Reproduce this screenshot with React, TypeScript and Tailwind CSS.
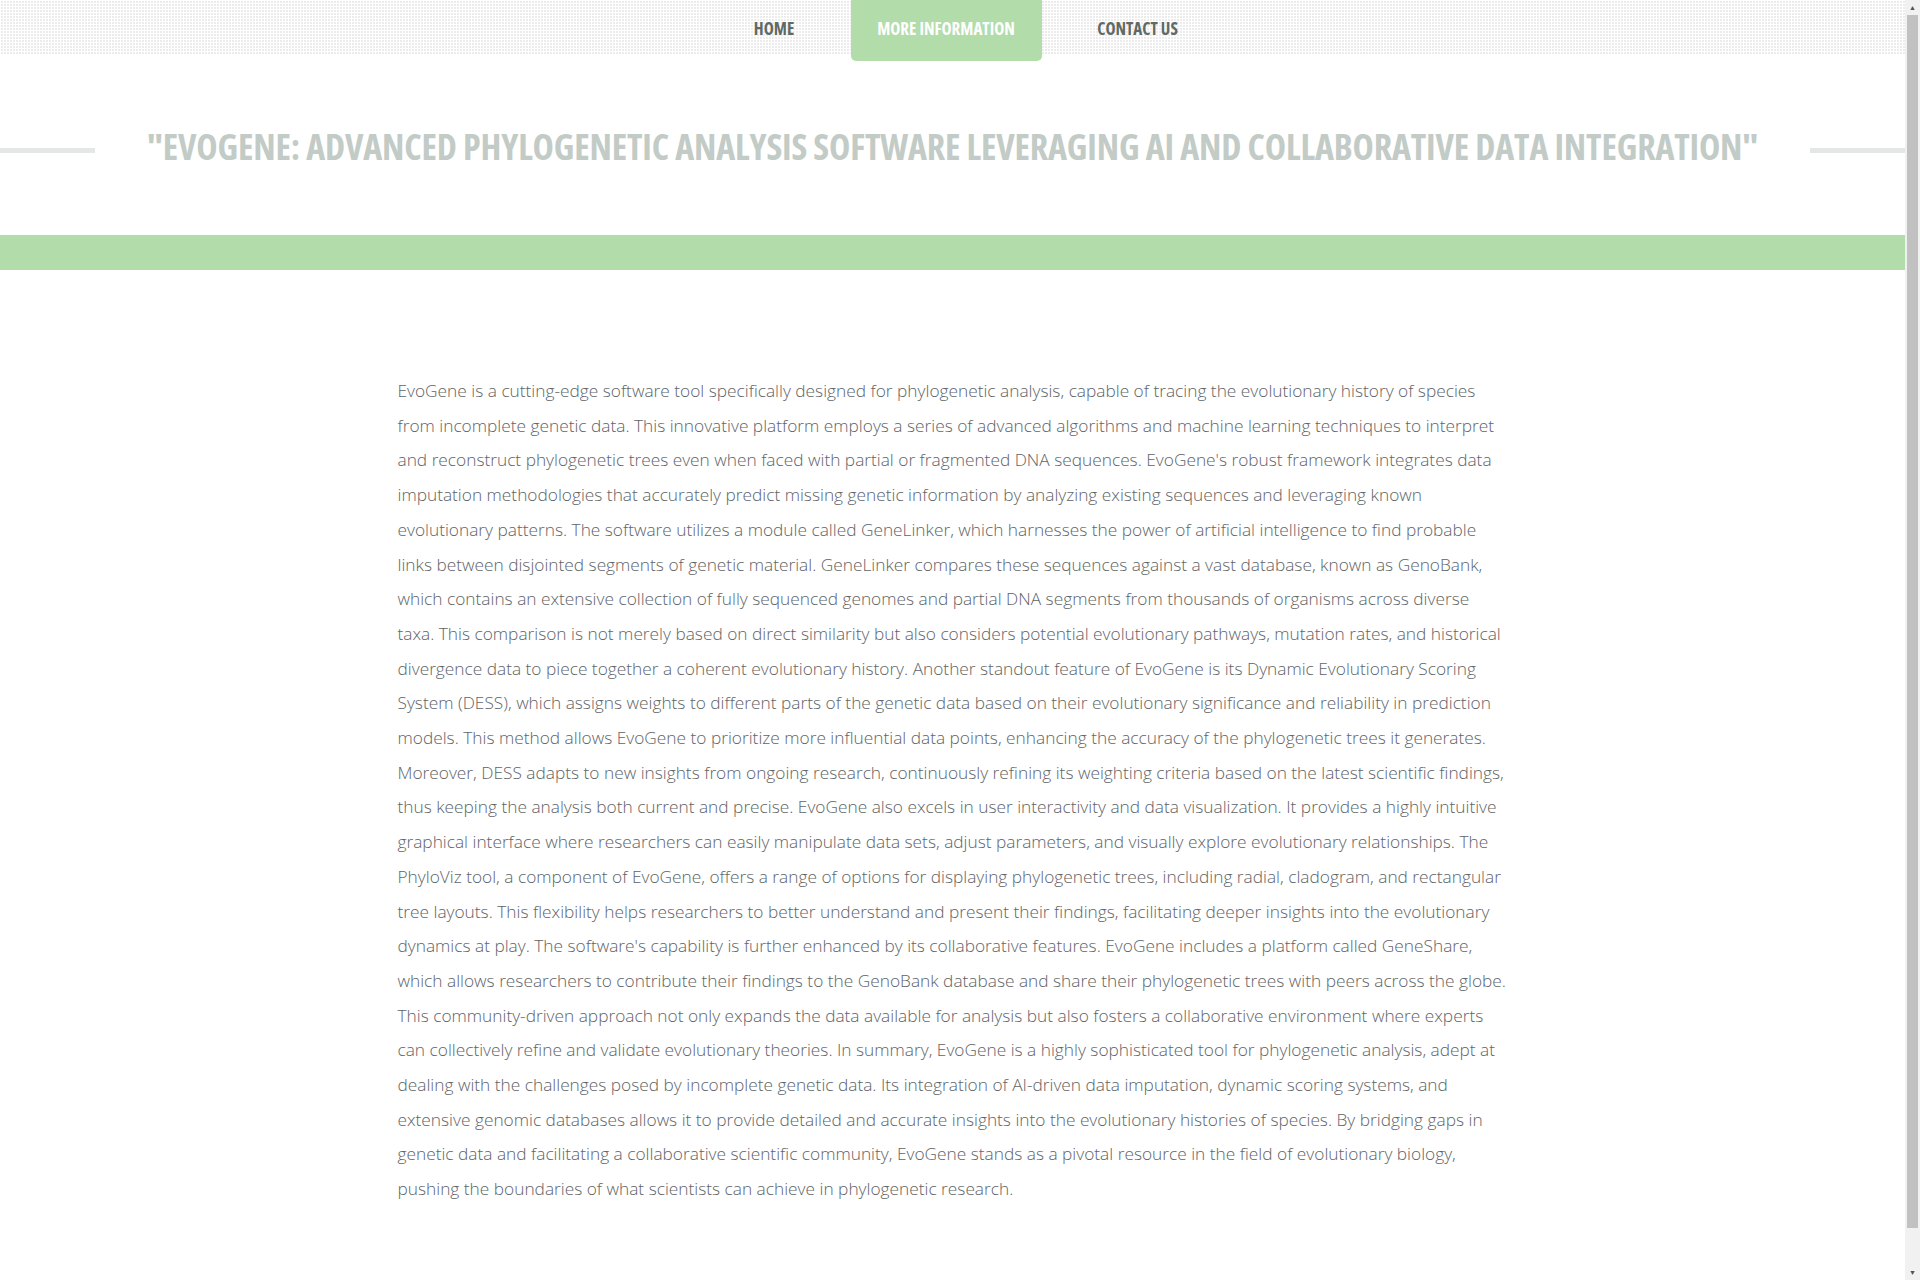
import React from 'react';

const paragraph =
  "EvoGene is a cutting-edge software tool specifically designed for phylogenetic analysis, capable of tracing the evolutionary history of species from incomplete genetic data. This innovative platform employs a series of advanced algorithms and machine learning techniques to interpret and reconstruct phylogenetic trees even when faced with partial or fragmented DNA sequences. EvoGene's robust framework integrates data imputation methodologies that accurately predict missing genetic information by analyzing existing sequences and leveraging known evolutionary patterns. The software utilizes a module called GeneLinker, which harnesses the power of artificial intelligence to find probable links between disjointed segments of genetic material. GeneLinker compares these sequences against a vast database, known as GenoBank, which contains an extensive collection of fully sequenced genomes and partial DNA segments from thousands of organisms across diverse taxa. This comparison is not merely based on direct similarity but also considers potential evolutionary pathways, mutation rates, and historical divergence data to piece together a coherent evolutionary history. Another standout feature of EvoGene is its Dynamic Evolutionary Scoring System (DESS), which assigns weights to different parts of the genetic data based on their evolutionary significance and reliability in prediction models. This method allows EvoGene to prioritize more influential data points, enhancing the accuracy of the phylogenetic trees it generates. Moreover, DESS adapts to new insights from ongoing research, continuously refining its weighting criteria based on the latest scientific findings, thus keeping the analysis both current and precise. EvoGene also excels in user interactivity and data visualization. It provides a highly intuitive graphical interface where researchers can easily manipulate data sets, adjust parameters, and visually explore evolutionary relationships. The PhyloViz tool, a component of EvoGene, offers a range of options for displaying phylogenetic trees, including radial, cladogram, and rectangular tree layouts. This flexibility helps researchers to better understand and present their findings, facilitating deeper insights into the evolutionary dynamics at play. The software's capability is further enhanced by its collaborative features. EvoGene includes a platform called GeneShare, which allows researchers to contribute their findings to the GenoBank database and share their phylogenetic trees with peers across the globe. This community-driven approach not only expands the data available for analysis but also fosters a collaborative environment where experts can collectively refine and validate evolutionary theories. In summary, EvoGene is a highly sophisticated tool for phylogenetic analysis, adept at dealing with the challenges posed by incomplete genetic data. Its integration of AI-driven data imputation, dynamic scoring systems, and extensive genomic databases allows it to provide detailed and accurate insights into the evolutionary histories of species. By bridging gaps in genetic data and facilitating a collaborative scientific community, EvoGene stands as a pivotal resource in the field of evolutionary biology, pushing the boundaries of what scientists can achieve in phylogenetic research.";

const navItems = [
  { label: 'HOME', width: 'w-[93px]', active: false },
  { label: 'MORE INFORMATION', width: 'w-[191px]', active: true },
  { label: 'CONTACT US', width: 'w-[132px]', active: false },
];

function Scrollbar() {
  return (
    <div className="w-[15px] h-full shrink-0 bg-[#f1f1f1] flex flex-col items-center">
      <div className="h-[15px] flex items-center justify-center text-[#505050] text-[7px] leading-none">▲</div>
      <div className="w-[11px] h-[1213px] bg-[#c1c1c1]" />
      <div className="flex-1" />
      <div className="h-[15px] flex items-center justify-center text-[#505050] text-[7px] leading-none">▼</div>
    </div>
  );
}

export default function App() {
  return (
    <div className="h-screen overflow-hidden flex bg-white font-['Open_Sans',sans-serif]">
      <div className="w-[1905px] shrink-0 h-full overflow-hidden">
        {/* Top nav with dotted pattern */}
        <header className="h-[55px] bg-[#ececec] bg-[linear-gradient(90deg,#ffffff_1px,transparent_1px),linear-gradient(#ffffff_1px,transparent_1px)] bg-[size:3px_3px]">
          <nav className="flex justify-center items-start gap-[30px] pl-[26px]">
            {navItems.map((item) => (
              <a
                key={item.label}
                href="#"
                className={
                  item.active
                    ? `flex items-center justify-center ${item.width} h-[61px] pb-[3px] rounded-b-[5px] bg-[#b2dcaa] text-white text-[17px] font-bold font-stretch-condensed`
                    : `flex items-center justify-center ${item.width} h-[55px] pt-[3px] text-[#5f6966] text-[17px] font-bold font-stretch-condensed`
                }
              >
                {item.label}
              </a>
            ))}
          </nav>
        </header>

        {/* Title */}
        <div className="flex items-center gap-[52px] pt-[68px] pb-[64px]">
          <div className="w-[95px] h-[5px] bg-[#e5e7e6] mt-[6px] shrink-0" />
          <h1 className="flex-1 text-center text-[36px] leading-[48px] font-bold font-stretch-condensed tracking-[-0.15px] text-[#c2cbc6] whitespace-nowrap">
            "EVOGENE: ADVANCED PHYLOGENETIC ANALYSIS SOFTWARE LEVERAGING AI AND COLLABORATIVE DATA INTEGRATION"
          </h1>
          <div className="w-[95px] h-[5px] bg-[#e5e7e6] mt-[6px] shrink-0" />
        </div>

        {/* Green band */}
        <div className="h-[35px] bg-[#b2dcaa]" />

        {/* Body */}
        <main className="max-w-[1140px] mx-auto px-[15px] pt-[104px] pb-[112px]">
          <p className="text-[17.3px] leading-[34.7px] text-[#606467] font-light">{paragraph}</p>
        </main>
      </div>
      <Scrollbar />
    </div>
  );
}
